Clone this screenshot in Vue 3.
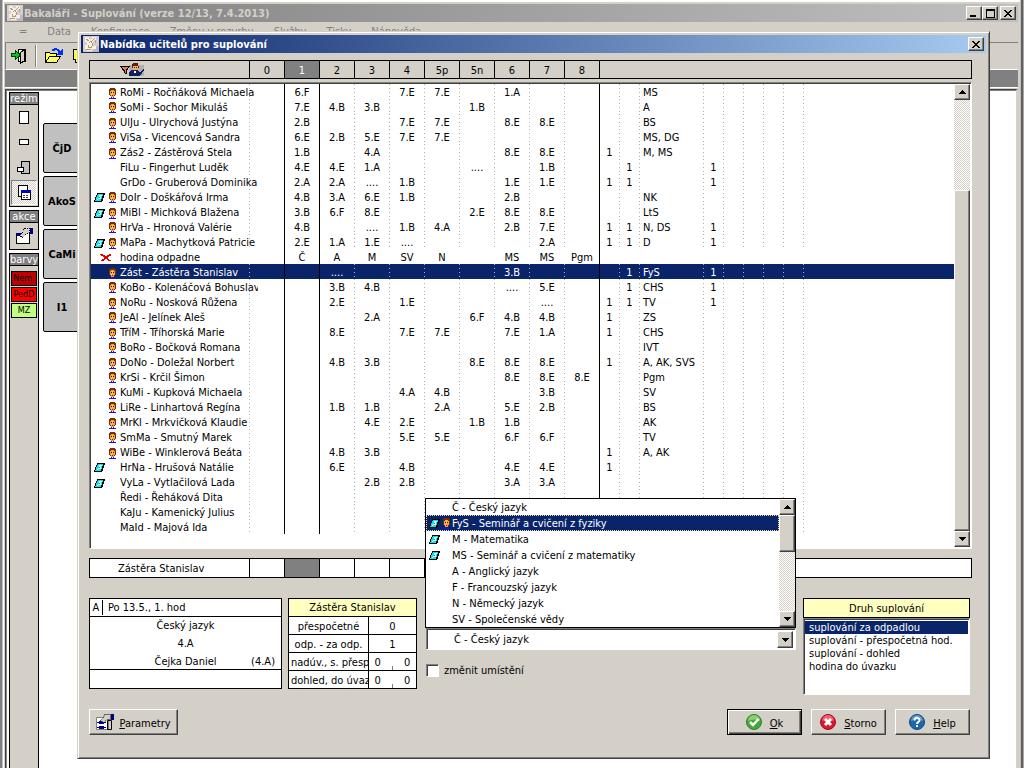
<script setup>
import { ref } from 'vue'

const hours = ['0', '1', '2', '3', '4', '5p', '5n', '6', '7', '8']

const source = `
f|RoMi - Ročňáková Michaela|,6.F,,,7.E,7.E,,1.A,,|||MS|
f|SoMi - Sochor Mikuláš|,7.E,4.B,3.B,,,1.B,,,|||A|
f|UlJu - Ulrychová Justýna|,2.B,,,7.E,7.E,,8.E,8.E,|||BS|
f|ViSa - Vicencová Sandra|,6.E,2.B,5.E,7.E,7.E,,,,|||MS, DG|
f|Zás2 - Zástěrová Stela|,1.B,,4.A,,,,8.E,8.E,|1||M, MS|
|FiLu - Fingerhut Luděk|,4.E,4.E,1.A,,,....,,1.B,||1||1
|GrDo - Gruberová Dominika|,2.A,2.A,....,1.B,,,1.E,1.E,|1|1||1
bf|DoIr - Doškářová Irma|,4.B,3.A,6.E,1.B,,,2.B,,|||NK|
bf|MiBl - Michková Blažena|,3.B,6.F,8.E,,,2.E,8.E,8.E,|||LtS|
f|HrVa - Hronová Valérie|,4.B,,....,1.B,4.A,,2.B,7.E,|1|1|N, DS|1
bf|MaPa - Machytková Patricie|,2.E,1.A,1.E,....,,,,2.A,|1|1|D|1
x|hodina odpadne|,Č,A,M,SV,N,,MS,MS,Pgm||||
sf|Zást - Zástěra Stanislav|,,....,,,,,3.B,,||1|FyS|1
f|KoBo - Kolenáčová Bohuslava|,,3.B,4.B,,,,....,5.E,||1|CHS|1
f|NoRu - Nosková Růžena|,,2.E,,1.E,,,,....,|1|1|TV|1
f|JeAl - Jelínek Aleš|,,,2.A,,,6.F,4.B,4.B,|1||ZS|
f|TříM - Tříhorská Marie|,,8.E,,7.E,7.E,,7.E,1.A,|1||CHS|
f|BoRo - Bočková Romana|,,,,,,,,,|||IVT|
f|DoNo - Doležal Norbert|,,4.B,3.B,,,8.E,8.E,8.E,|1||A, AK, SVS|
f|KrSi - Krčil Šimon|,,,,,,,8.E,8.E,8.E|||Pgm|
f|KuMi - Kupková Michaela|,,,,4.A,4.B,,,3.B,|||SV|
f|LiRe - Linhartová Regína|,,1.B,1.B,,2.A,,5.E,2.B,|||BS|
f|MrKl - Mrkvičková Klaudie|,,,4.E,2.E,,1.B,1.B,,|||AK|
f|SmMa - Smutný Marek|,,,,5.E,5.E,,6.F,6.F,|||TV|
f|WiBe - Winklerová Beáta|,,4.B,3.B,,,,,,|1||A, AK|
b|HrNa - Hrušová Natálie|,,6.E,,4.B,,,4.E,4.E,|1|||
b|VyLa - Vytlačilová Lada|,,,2.B,2.B,,,3.A,3.A,||||
|Ředi - Řeháková Dita|,,,,,,,,,||||
|KaJu - Kamenický Julius|,,,,,,,,,||||
|MaId - Majová Ida|,,,,,,,,,||||`

const teachers = source.trim().split('\n').map((line) => {
  const [flags, name, lessons, a, b, subjects, c] = line.split('|')
  return { flags, name, lessons: lessons.split(','), a, b, subjects, c }
})

const subjects = [
  { text: 'Č - Český jazyk', flags: '' },
  { text: 'FyS - Seminář a cvičení z fyziky', flags: 'bf' },
  { text: 'M - Matematika', flags: 'b' },
  { text: 'MS - Seminář a cvičení z matematiky', flags: 'b' },
  { text: 'A - Anglický jazyk', flags: '' },
  { text: 'F - Francouzský jazyk', flags: '' },
  { text: 'N - Německý jazyk', flags: '' },
  { text: 'SV - Společenské vědy', flags: '' },
]
const activeSubject = ref(1)
const chosen = ref('Č - Český jazyk')

const kinds = ['suplování za odpadlou', 'suplování - přespočetná hod.', 'suplování - dohled', 'hodina do úvazku']
const activeKind = ref(0)

const menu = ['=', 'Data', 'Konfigurace', 'Změny v rozvrhu', 'Služby', 'Tisky', 'Nápověda']
const tiles = ['ČjD', 'AkoS', 'CaMi', 'I1']
</script>

<template>
  <svg class="defs" aria-hidden="true">
    <symbol id="face" viewBox="0 0 9 11">
      <path fill="#713008" d="M2 0h5v1h1v6H7v1H2V7H1V1h1z" />
      <path fill="#f5a038" d="M3 2h3v1h1v4H6v2H3V7H2V3h1z" />
      <path fill="#ffd070" d="M4 3h1v3H4zM3 6h1v1H3z" />
      <path fill="#301000" d="M3 4h1v1H3zM5 4h1v1H5z" />
      <path fill="#d01000" d="M4 7h1v1H4z" />
      <path fill="#1010ff" d="M1 10h2V9h1v1h1V9h1v1h2v1H1z" />
    </symbol>
    <symbol id="book" viewBox="0 0 11 9">
      <path fill="#000" d="M3 0h8v2h-1v3H9v3H8v1H0V7h1V4h1V2h1z" />
      <path fill="#00e8f0" d="M4 1h5v2H8v3H7v2H1V7h1V4h1V2h1z" />
      <path fill="#fff" d="M5 2h3v1H7v3H4V5h1zM3 6h1v1H3z" />
      <path fill="#00a0b0" d="M5 4h1v1H5z" />
    </symbol>
    <symbol id="cross" viewBox="0 0 12 8">
      <path fill="#e00000" d="M0 0h3v1h2v1h2V1h2V0h2v2H9v1H8v2h1v1h2v1H8V6H7V5H5v1H4v1H1V6h1V5h2V3H3V2H1V1H0z" />
    </symbol>
    <symbol id="up" viewBox="0 0 7 4"><path d="M3 0h1v1h1v1h1v1h1v1H0V3h1V2h1V1h1z" /></symbol>
    <symbol id="down" viewBox="0 0 7 4"><path d="M0 0h7v1H6v1H5v1H4v1H3V3H2V2H1V1H0z" /></symbol>
    <symbol id="close" viewBox="0 0 8 7"><path d="M0 0h2v1h1v1h2V1h1V0h2v1H7v1H6v1H5v1h1v1h1v1h1v1H6V6H5V5H3v1H2v1H0V6h1V5h1V4h1V3H2V2H1V1H0z" /></symbol>
    <symbol id="logo" viewBox="0 0 16 16">
      <path fill="#d8ccd0" d="M0 0h16v16H0z" />
      <path fill="#c0b4c0" d="M12 10h4v6h-6v-2h2z" />
      <path fill="#f6f0e4" d="M2 1h4v2h3V1h4v4h-3v5h3v3h-4v2H4v-2H2V9h2V6H2z" />
      <path fill="none" stroke="#b09a78" d="M3 3l3 2M9 5l3-3M6 7c2-3 4 0 3 3S5 12 5 9M3 13h5M12 4v3" />
    </symbol>
    <symbol id="wrench" viewBox="0 0 18 16">
      <path fill="#fff" stroke="#000" d="M1.500 5.500h13v10h-13z" />
      <path fill="#000080" d="M1 5h5v3H1zM15 0h3v6h-3z" />
      <path fill="#d4d0c8" stroke="#000" stroke-dasharray="1 1" d="M9.500.5h5v5h-3l-4 4-3-2 3-3-1-1z" />
    </symbol>
  </svg>

  <div class="app">
    <header class="titlebar gray">
      <svg class="logo"><use href="#logo" /></svg>
      <h1>Bakaláři - Suplování (verze 12/13, 7.4.2013)</h1>
      <button class="cap" aria-label="Minimalizovat"><i class="min"></i></button>
      <button class="cap" aria-label="Maximalizovat"><i class="max"></i></button>
      <button class="cap last" aria-label="Zavřít"><svg width="8" height="7"><use href="#close" /></svg></button>
    </header>
    <nav class="menu"><a v-for="m in menu" :key="m" href="#">{{ m }}</a></nav>
    <div class="toolbar">
      <button class="tool" aria-label="Konec">
        <svg width="16" height="16" viewBox="0 0 16 16">
          <path fill="#fff" stroke="#000" d="M7.500 1.500h7v12h-7z" /><path fill="#d4d0c8" stroke="#000" d="M9.500 4.500l4-3v11l-4 3z" />
          <path fill="#00c820" stroke="#004000" d="M.5 5.500h4v-3l5 4.500-5 4.500v-3h-4z" />
        </svg>
      </button>
      <span class="split"></span>
      <button class="tool" aria-label="Otevřít">
        <svg width="20" height="16" viewBox="0 0 20 16">
          <path fill="#ffff60" stroke="#000" d="M1.500 14.500v-10h4l1 1h6v3" /><path fill="#ffff60" stroke="#000" d="M1.500 14.500l4-6h11l-4 6z" />
          <path fill="none" stroke="#0030ff" stroke-width="2" d="M8 3c3-3 7-2 8 3" /><path fill="#0030ff" d="M12 7h7V0z" />
        </svg>
      </button>
      <button class="tool" aria-label="Uložit">
        <svg width="16" height="16" viewBox="0 0 16 16"><path fill="#ffff40" stroke="#000" d="M1.500 1.500h12v10h-8v3h-2v-3h-2z" /></svg>
      </button>
    </div>
    <div class="band"></div>
    <main class="desk">
      <aside class="side">
        <section>
          <h2>režim</h2>
          <button class="mode" aria-label="Stránka"><svg width="11" height="14"><path fill="#fff" stroke="#000" d="M.5.5h9v12h-9z" /></svg></button>
          <button class="mode" aria-label="Řádek"><svg width="11" height="7"><path fill="#fff" stroke="#000" d="M.5.5h9v5h-9z" /></svg></button>
          <button class="mode" aria-label="Skupina"><svg width="14" height="14"><path fill="#c0c0c0" stroke="#000" d="M4.500.5h8v12h-8z" /><path fill="#fff" stroke="#000" d="M.5 6.500h6v4h-6z" /></svg></button>
          <button class="mode on" aria-label="Okno">
            <svg width="14" height="15"><path fill="#fff" stroke="#000" d="M1.500.5h9v11h-9z" /><path fill="#fff" stroke="#000" d="M4.500 5.500h9v9h-9z" /><path fill="#0000c0" d="M4 5h10v3H4z" /><path stroke="#404060" stroke-dasharray="2 1" d="M6 10.500h6M6 12.500h6" /></svg>
          </button>
        </section>
        <section>
          <h2>akce</h2>
          <button class="mode" aria-label="Nastavení"><svg width="18" height="16"><use href="#wrench" /></svg></button>
        </section>
        <section class="grow">
          <h2>barvy</h2>
          <span class="tag dark">Nem.</span><span class="tag red">PedD</span><span class="tag lime">MZ</span>
        </section>
      </aside>
      <div class="tiles"><button v-for="t in tiles" :key="t">{{ t }}</button></div>
    </main>

    <div class="dialog" role="dialog" aria-labelledby="dlg">
      <header class="titlebar blue">
        <svg class="logo"><use href="#logo" /></svg>
        <h1 id="dlg">Nabídka učitelů pro suplování</h1>
        <button class="cap last" aria-label="Zavřít"><svg width="8" height="7"><use href="#close" /></svg></button>
      </header>
      <div class="body">
        <table class="strip head">
          <tbody>
            <tr>
              <th class="name">
                <svg class="filter" width="24" height="14" viewBox="0 0 24 14" role="img" aria-label="Filtr učitelů">
                  <path fill="#b0b0b0" d="M9 2h15v11H9z" /><path fill="#f07840" stroke="#000" d="M.5 3.500h9l-3.500 4v3l-2-1V7.500z" />
                  <path fill="#102060" d="M9 13V9l3-2h5l3 2 3-3 1 1-4 6z" /><path fill="#f0b070" d="M13 2h5v5h-5z" /><path fill="#602000" d="M13 0h5v3h1v2h-1V3h-5v2h-1V1h1zM14 4h1v1h-1zM16 4h1v1h-1z" /><path fill="#fff" d="M14 8h2v2h-2z" />
                </svg>
              </th>
              <th v-for="h in hours" :key="h" class="hour" :class="{ current: h === '1' }" scope="col">{{ h }}</th>
              <th class="rest"></th>
            </tr>
          </tbody>
        </table>

        <div class="listbox">
          <table class="teachers">
            <colgroup>
              <col class="c-name"><col v-for="h in hours" :key="h" class="c-hour">
              <col class="c-small"><col class="c-small"><col class="c-subj">
              <col v-for="n in 5" :key="n" class="c-small"><col>
            </colgroup>
            <tbody>
              <tr v-for="t in teachers" :key="t.name" :class="{ selected: t.flags.includes('s'), plain: t.flags === 'x' }">
                <td class="who">
                  <div>
                    <span v-if="t.flags === 'x'" class="slot drop"><svg width="12" height="8"><use href="#cross" /></svg></span>
                    <span v-else class="slot">
                      <span class="half"><svg v-if="t.flags.includes('b')" width="11" height="9"><use href="#book" /></svg></span>
                      <svg v-if="t.flags.includes('f')" width="9" height="11"><use href="#face" /></svg>
                    </span>
                    <span class="label">{{ t.name }}</span>
                  </div>
                </td>
                <td v-for="(l, i) in t.lessons" :key="i" :class="{ solid: i < 2 || i === 9 }">{{ l }}</td>
                <td>{{ t.a }}</td><td>{{ t.b }}</td>
                <td class="left">{{ t.subjects }}</td>
                <td>{{ t.c }}</td><td v-for="n in 4" :key="n"></td><td class="open"></td>
              </tr>
            </tbody>
          </table>
          <div class="scroll">
            <button aria-label="Nahoru"><svg width="7" height="4"><use href="#up" /></svg></button>
            <span class="space"></span><span class="thumb long"></span>
            <button aria-label="Dolů"><svg width="7" height="4"><use href="#down" /></svg></button>
          </div>
        </div>

        <table class="strip chosen">
          <tbody>
            <tr>
              <td class="name">Zástěra Stanislav</td>
              <td v-for="h in hours" :key="h" class="hour" :class="{ current: h === '1' }"></td>
              <td class="rest"></td>
            </tr>
          </tbody>
        </table>

        <div class="bottom">
          <section class="lesson">
            <div class="card">
              <div class="when"><span>A</span><p>Po 13.5., 1. hod</p></div>
              <p class="mid">Český jazyk</p>
              <p class="mid">4.A</p>
              <p class="mid">Čejka Daniel<span class="room">(4.A)</span></p>
            </div>
            <div class="card blank"></div>
          </section>

          <table class="stats">
            <colgroup><col class="c-label"><col></colgroup>
            <thead><tr><th colspan="2">Zástěra Stanislav</th></tr></thead>
            <tbody>
              <tr><td>přespočetné</td><td>0</td></tr>
              <tr><td>odp. - za odp.</td><td>1</td></tr>
              <tr><td class="cut">nadúv., s. přesp</td><td><div class="pair"><span>0</span><i></i><span>0</span></div></td></tr>
              <tr><td class="cut">dohled, do úvaz</td><td><div class="pair"><span>0</span><i></i><span>0</span></div></td></tr>
            </tbody>
          </table>

          <section class="pick">
            <div class="combo">
              <select v-model="chosen" aria-label="Předmět"><option v-for="s in subjects" :key="s.text">{{ s.text }}</option></select>
              <span class="arrow"><svg width="7" height="4"><use href="#down" /></svg></span>
              <div class="popup">
                <ul role="listbox" aria-label="Předměty">
                  <li v-for="(s, i) in subjects" :key="s.text" role="option" :aria-selected="i === activeSubject" :class="{ active: i === activeSubject }" @click="activeSubject = i">
                    <span class="slot">
                      <span class="half"><svg v-if="s.flags.includes('b')" width="11" height="9"><use href="#book" /></svg></span>
                      <svg v-if="s.flags.includes('f')" width="9" height="11"><use href="#face" /></svg>
                    </span>{{ s.text }}
                  </li>
                </ul>
                <div class="scroll">
                  <button aria-label="Nahoru"><svg width="7" height="4"><use href="#up" /></svg></button>
                  <span class="thumb short"></span><span class="space"></span>
                  <button aria-label="Dolů"><svg width="7" height="4"><use href="#down" /></svg></button>
                </div>
              </div>
            </div>
            <label class="check"><input type="checkbox">změnit umístění</label>
          </section>

          <section class="kind">
            <h2 id="kind">Druh suplování</h2>
            <ul role="listbox" aria-labelledby="kind">
              <li v-for="(k, i) in kinds" :key="k" role="option" :aria-selected="i === activeKind" :class="{ active: i === activeKind }" @click="activeKind = i">{{ k }}</li>
            </ul>
          </section>
        </div>

        <footer class="actions">
          <button class="btn wide"><svg width="18" height="16" viewBox="0 0 18 16">
            <path fill="#fff" stroke="#808080" d="M.5 3.500h12v12H.5z" /><path fill="#000080" d="M1 8h9v1H1zM3 7h5v3H3zM1 13h9v1H1zM3 12h5v3H3zM15 0h3v6h-3z" />
            <path fill="none" stroke="#000" d="M11.500 6.500h4v9h-4z" /><path fill="#d4d0c8" stroke="#000" stroke-dasharray="1 1" d="M8.500.5h6v5h-3l-4 3-3-2 3-3z" />
          </svg><span><u>P</u>arametry</span></button>
          <span class="gap"></span>
          <button class="btn main"><svg width="16" height="16" viewBox="0 0 16 16"><circle cx="8" cy="8" r="7.500" fill="#45a83a" stroke="#2a8428" /><path fill="#8cd070" d="M2 7a6 6 0 0 1 12 0c-4-2-8-2-12 0z" /><path fill="none" stroke="#fff" stroke-width="2.500" d="M4 8l3 3 5.500-6" /></svg><span><u>O</u>k</span></button>
          <button class="btn"><svg width="16" height="16" viewBox="0 0 16 16"><circle cx="8" cy="8" r="7.500" fill="#d8182c" stroke="#b00820" /><path fill="#f06070" d="M2 7a6 6 0 0 1 12 0c-4-2-8-2-12 0z" /><path stroke="#fff" stroke-width="3" d="M5 5l6 6M11 5l-6 6" /></svg><span><u>S</u>torno</span></button>
          <button class="btn"><svg width="16" height="16" viewBox="0 0 16 16"><circle cx="8" cy="8" r="7.500" fill="#1c68ac" stroke="#0c4880" /><path fill="#5c9cd0" d="M2 7a6 6 0 0 1 12 0c-4-2-8-2-12 0z" /><path fill="none" stroke="#fff" stroke-width="2" d="M5.500 6.500c0-4 5.500-3 5 0C10.200 8 8 8 8 10" /><path fill="#fff" d="M7 11h2v2H7z" /></svg><span><u>H</u>elp</span></button>
        </footer>
      </div>
    </div>
  </div>
</template>

<style>
body { margin: 0; overflow: hidden; background: #d4d0c8; }
</style>

<style scoped>
* { box-sizing: border-box; }
.defs { position: absolute; width: 0; height: 0; }
svg { display: block; flex: none; shape-rendering: crispEdges; }
.btn svg { shape-rendering: auto; }
h1, h2, p, ul { margin: 0; padding: 0; font-size: 11px; font-weight: normal; list-style: none; }
button { padding: 0; font: inherit; color: #000; background: none; border: 0; }
table { border-spacing: 0; table-layout: fixed; width: 100%; }
td, th { padding: 0; font-weight: normal; }

.app {
  position: relative;
  display: flex;
  flex-direction: column;
  height: 100vh;
  padding: 2px 2px 0 1px;
  overflow: hidden;
  color: #000;
  font: 11px/15px "DejaVu Sans Condensed", "DejaVu Sans", "Liberation Sans", sans-serif;
  background: #d4d0c8;
  border: solid;
  border-width: 2px 4px 0;
  border-color: #fff #404040 #404040 #fff;
  border-image: linear-gradient(to right, #808080 0, #808080 2px, #fff 3px, #fff calc(100% - 4px), #808080 calc(100% - 3px), #404040 calc(100% - 2px), #c8c8c8 100%) 2 4 0 4;
}

.titlebar { display: flex; flex: none; align-items: center; height: 18px; padding-right: 2px; }
.titlebar h1 { flex: 1; margin-left: 1px; font-weight: bold; white-space: nowrap; }
.titlebar .logo { width: 16px; height: 16px; margin-left: 2px; }
.gray { color: #d4d0c8; background: linear-gradient(to right, #808080, #c0c0c0); }
.blue { color: #fff; background: linear-gradient(to right, #0a246a, #a6caf0); }
.cap, .scroll button, .arrow {
  display: flex;
  flex: none;
  align-items: center;
  justify-content: center;
  width: 16px;
  height: 14px;
  background: #d4d0c8;
  border: 1px solid;
  border-color: #fff #404040 #404040 #fff;
  box-shadow: inset -1px -1px #808080;
}
.cap.last { margin-left: 2px; }
.min { width: 6px; height: 2px; margin: 6px 3px 0 0; background: #000; }
.max { width: 9px; height: 9px; border: 1px solid #000; border-top-width: 2px; }

.menu { display: flex; flex: none; gap: 20px; height: 20px; padding: 2px 0 0 14px; }
.menu a { color: #808080; text-decoration: none; }
.toolbar { display: flex; flex: none; align-items: center; height: 28px; padding-left: 5px; border-top: 1px solid #808080; border-bottom: 1px solid #fff; border-left: 1px solid #808080; }
.tool { margin-right: 8px; }
.split { width: 2px; height: 22px; margin-right: 7px; border-left: 1px solid #808080; border-right: 1px solid #fff; }
.band { flex: none; height: 18px; margin-bottom: 1px; background: #808080; border-bottom: 1px solid #fff; }
.desk { display: flex; flex: 1; gap: 4px; padding: 2px 0 0 3px; background: #fff; border: solid #404040; border-width: 1px 0 0 1px; border-right: 2px solid #d4d0c8; box-shadow: inset 1px 1px #808080; }
.side { display: flex; flex-direction: column; gap: 3px; width: 30px; }
.side section { padding-bottom: 1px; background: #d4d0c8; border: 1px solid #000; }
.side .grow { flex: 1; border-bottom: 0; }
.side h2 { height: 12px; line-height: 12px; text-align: center; color: #fff; background: #808080; border-bottom: 1px solid #000; }
.mode { display: flex; align-items: center; justify-content: center; width: 26px; height: 25px; margin: 0 auto; }
.on { border: 1px solid; border-color: #808080 #fff #fff #808080; background: conic-gradient(#fff 25%, #d4d0c8 0 50%, #fff 0 75%, #d4d0c8 0) 0 0 / 2px 2px; }
.tag { display: block; height: 15px; margin: 1px 1px 0; font: 9px/13px "DejaVu Sans Condensed", sans-serif; text-align: center; border: 1px solid #000; }
.dark { margin-top: 5px; background: #c00000; }
.red { background: #f00; }
.lime { background: #c0ff80; }
.tiles { display: flex; flex-direction: column; gap: 3px; padding-top: 31px; }
.tiles button { width: 38px; height: 50px; font: bold 11px "DejaVu Sans Condensed", sans-serif; background: #c0c0c0; border: 1px solid #000; border-radius: 2px; }

.dialog {
  position: absolute;
  top: 29px;
  left: 73px;
  right: 30px;
  background: #d4d0c8;
  border: 1px solid;
  border-color: #d4d0c8 #404040 #404040 #d4d0c8;
  box-shadow: inset 1px 1px #fff, inset -1px -1px #808080;
  padding: 3px;
}
.body { padding: 7px 14px 20px 8px; }

.strip { border: 1px solid #000; }
.strip .name { width: 160px; border-right: 1px solid #000; }
.strip .hour { width: 35px; border-right: 1px solid #000; text-align: center; }
.head .hour { padding-top: 2px; }
.head .current { color: #fff; }
.current { background: #808080; }
.head tr { height: 17px; }
.filter { margin-left: 30px; }
.chosen { margin-top: 9px; background: #fff; }
.chosen tr { height: 18px; }
.chosen .name { padding: 1px 0 0 28px; }

.listbox { display: flex; align-items: stretch; height: 467px; margin-top: 3px; background: #fff; border: 1px solid; border-color: #808080 #fff #fff #808080; box-shadow: inset 1px 1px #404040; padding: 1px; }
.teachers { flex: 1; align-self: flex-start; width: 0; }
.c-name { width: 159px; }
.c-hour { width: 35px; }
.c-small { width: 20px; }
.c-subj { width: 64px; }
.c-label { width: 80px; }
.teachers td {
  height: 15px;
  padding: 2px 1px 0 0;
  line-height: 13px;
  text-align: center;
  white-space: nowrap;
  background: repeating-linear-gradient(to bottom, #b0b0b0 0 1px, transparent 1px 4px) right / 1px 100% no-repeat;
}
.teachers .plain td { background: none; }
.teachers td.solid, .teachers .plain td.solid { background: linear-gradient(#000, #000) right / 1px 100% no-repeat; }
.teachers td.open { background: none; }
.teachers td.left { padding-left: 3px; text-align: left; }
.teachers tr:nth-child(odd) td { padding-top: 3px; line-height: 12px; }
.selected { color: #fff; background: #0a246a; }
.who div { display: flex; align-items: center; height: 12px; margin-right: -9px; padding-left: 3px; overflow-x: clip; overflow-y: visible; }
.who .slot { height: 12px; }
.who .label { line-height: 12px; }
.slot { display: flex; flex: none; align-items: center; width: 26px; }
.half { width: 14px; }
.drop { padding-left: 6px; }

.scroll { display: flex; flex: none; flex-direction: column; width: 16px; background: conic-gradient(#fff 25%, #d4d0c8 0 50%, #fff 0 75%, #d4d0c8 0) 0 0 / 2px 2px; }
.scroll button { height: 16px; }
.space { flex: 1; }
.thumb { background: #d4d0c8; border: 1px solid; border-color: #fff #404040 #404040 #fff; box-shadow: inset -1px -1px #808080; }
.long { height: 341px; }
.short { height: 37px; }

.bottom { display: grid; grid-template-columns: 193px 131px minmax(371px, 1fr) 167px; column-gap: 6px; align-items: start; margin-top: 20px; padding-right: 2px; }
.card { background: #fff; border: 1px solid #000; }
.card p { height: 18px; line-height: 17px; }
.when { display: flex; height: 18px; border-bottom: 1px solid #000; }
.when span { width: 13px; margin: 1px 0; line-height: 15px; text-align: center; border-right: 1px solid #000; }
.when p { padding-left: 5px; }
.mid { display: grid; grid-template-columns: 1fr auto 1fr; }
.mid::before { content: ""; }
.room { padding-right: 6px; text-align: right; }
.blank { height: 20px; margin-top: -1px; }
.lesson .card:first-child { height: 72px; }

.stats { width: 129px; border: solid #000; border-width: 1px 0 0 1px; background: #fff; }
.stats th { height: 18px; background: #ffffc0; border: solid #000; border-width: 0 1px 1px 0; }
.stats td { height: 18px; padding-top: 1px; overflow: hidden; text-align: center; white-space: nowrap; border: solid #000; border-width: 0 1px 1px 0; }
.stats td.cut { padding-left: 2px; text-align: left; }
.pair { display: flex; align-items: flex-end; justify-content: space-around; }
.pair i { width: 1px; height: 4px; background: #808080; }

.combo { position: relative; display: flex; width: 370px; height: 22px; margin: 30px 0 0 1px; padding: 2px; background: #fff; border: 1px solid; border-color: #808080 #fff #fff #808080; box-shadow: inset 1px 1px #404040; }
.combo select { flex: 1; min-width: 0; padding: 0 0 0 25px; font: inherit; color: #000; appearance: none; background: #fff; border: 0; outline: 0; }
.arrow { height: 17px; }
.popup { position: absolute; left: -2px; bottom: 21px; display: flex; width: 371px; height: 130px; background: #fff; border: 1px solid #000; }
.popup ul { flex: 1; }
.popup li { display: flex; align-items: center; height: 16px; padding-left: 3px; }
.popup .slot { width: 23px; }
.popup .half { width: 13px; }
.popup .active { outline: 1px dotted #f0d890; outline-offset: -1px; }
.active { color: #fff; background: #0a246a; }
.check { display: flex; align-items: center; gap: 5px; margin: 13px 0 0 1px; }
.check input { appearance: none; width: 13px; height: 13px; margin: 0; background: #fff; border: 1px solid; border-color: #808080 #fff #fff #808080; box-shadow: inset 1px 1px #404040; }

.kind h2 { height: 20px; line-height: 20px; text-align: center; background: #ffffc0; border: 1px solid #000; }
.kind ul { height: 77px; padding: 2px 1px; background: #fff; border: 1px solid; border-color: #808080 #fff #fff #808080; box-shadow: inset 1px 1px #404040; }
.kind li { height: 13px; padding-left: 4px; line-height: 13px; }

.actions { display: flex; gap: 9px; margin-top: 14px; padding-right: 2px; }
.gap { flex: 1; }
.btn { display: flex; align-items: center; justify-content: center; gap: 8px; width: 75px; height: 26px; background: #d4d0c8; border: 1px solid; border-color: #fff #404040 #404040 #fff; box-shadow: inset -1px -1px #808080; }
.btn span { padding-top: 2px; }
.wide { width: 89px; gap: 5px; }
.main { border-color: #000; box-shadow: inset 1px 1px #fff, inset -1px -1px #404040, inset -2px -2px #808080; }
</style>
